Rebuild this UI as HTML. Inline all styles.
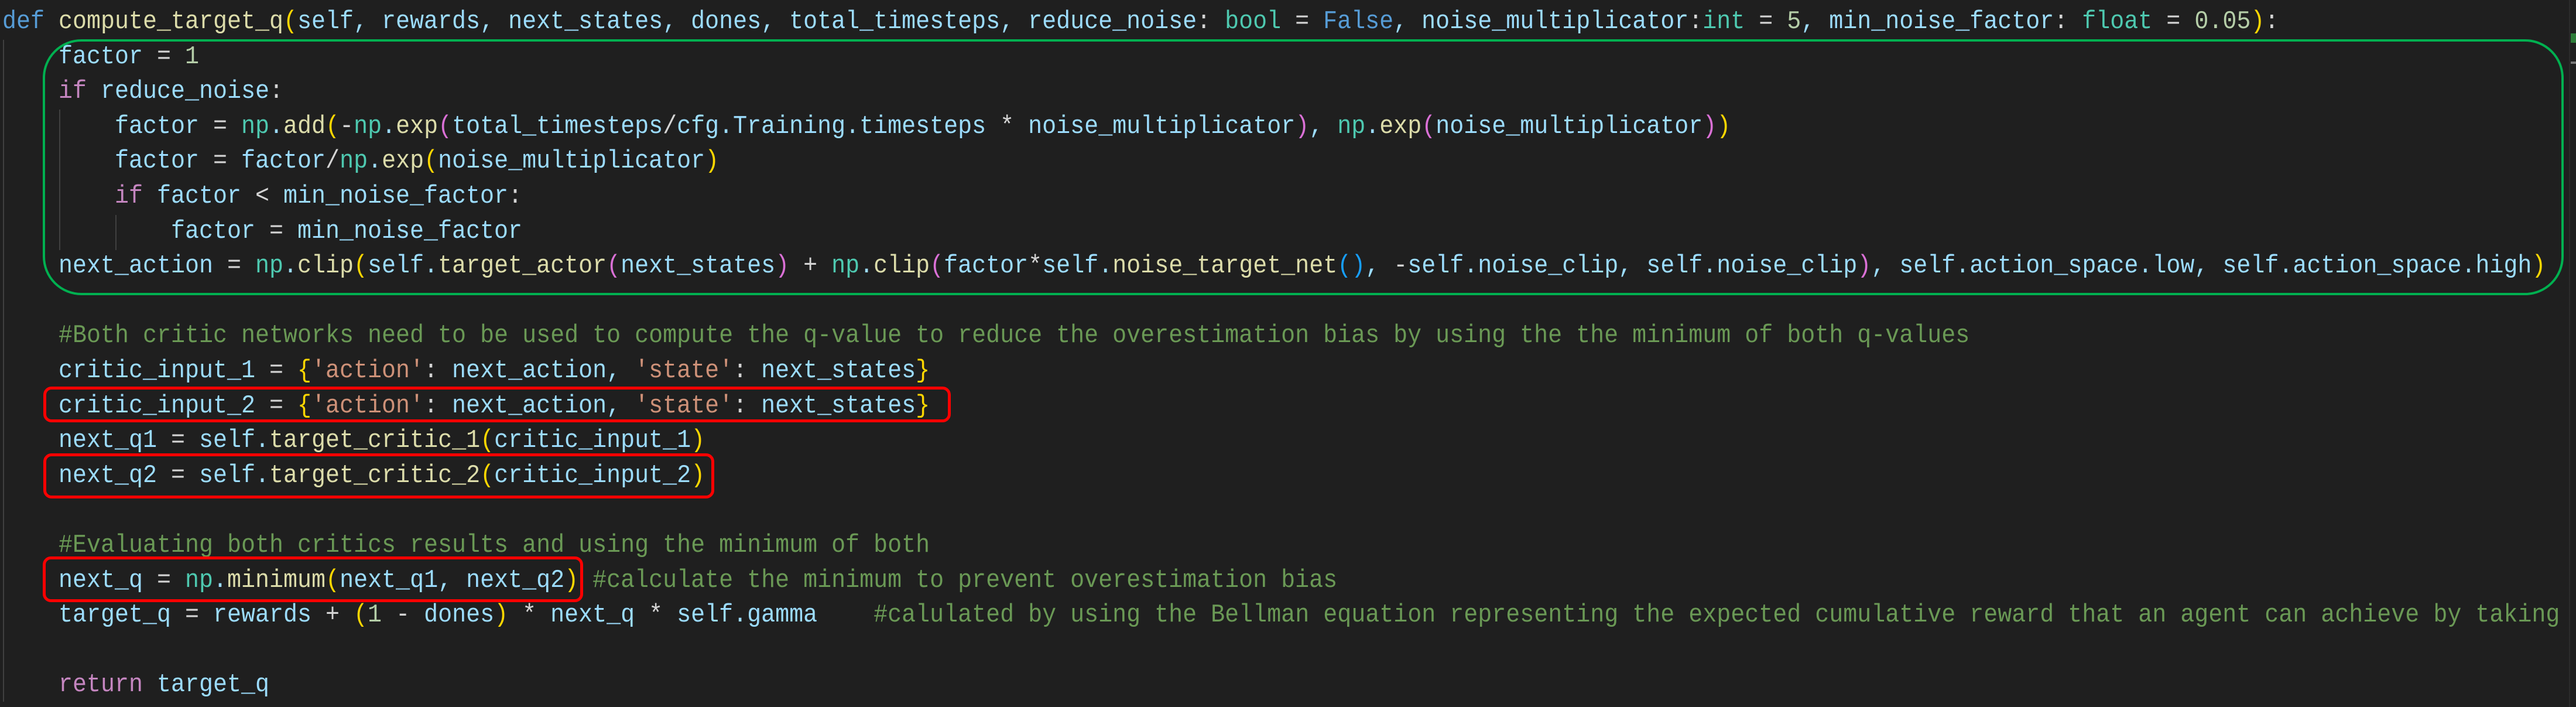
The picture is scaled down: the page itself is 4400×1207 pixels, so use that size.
<!DOCTYPE html>
<html><head><meta charset="utf-8"><style>
html,body{margin:0;padding:0;background:#1f1f1f;}
body{width:4400px;height:1207px;position:relative;overflow:hidden;font-family:"Liberation Mono",monospace;font-size:44px;color:#9cdcfe;}
.l{position:absolute;left:4px;height:59.6px;line-height:59.6px;white-space:pre;width:4822px;overflow:hidden;transform:scaleX(0.909);transform-origin:0 0;}
.k{color:#569cd6}.f{color:#dcdcaa}.c{color:#c586c0}.t{color:#4ec9b0}.n{color:#b5cea8}.s{color:#ce9178}.m{color:#6a9955}.w{color:#d4d4d4}
.b1{color:#ffd700}.b2{color:#da70d6}.b3{color:#179fff}
.g{position:absolute;width:2px;background:#404040}
.box{position:absolute;box-sizing:border-box;}
</style></head><body>
<div class="g" style="left:5px;top:68px;height:1130px"></div>
<div class="g" style="left:101px;top:187px;height:240px"></div>
<div class="g" style="left:197px;top:367px;height:60px"></div>
<div style="position:absolute;left:4388px;top:0;width:2px;height:1207px;background:#2b2b2b"></div>
<div style="position:absolute;left:4391px;top:57px;width:9px;height:16px;background:#2e7d3a"></div>
<div style="position:absolute;left:4391px;top:105px;width:9px;height:4px;background:#777"></div>

<div class="l" style="top:8px"><span class="k">def</span> <span class="f">compute_target_q</span><span class="b1">(</span>self, rewards, next_states, dones, total_timesteps, reduce_noise<span class="w">:</span> <span class="t">bool</span> <span class="w">=</span> <span class="k">False</span>, noise_multiplicator<span class="w">:</span><span class="t">int</span> <span class="w">=</span> <span class="n">5</span>, min_noise_factor<span class="w">:</span> <span class="t">float</span> <span class="w">=</span> <span class="n">0.05</span><span class="b1">)</span><span class="w">:</span></div>
<div class="l" style="top:67.6px">    factor <span class="w">=</span> <span class="n">1</span></div>
<div class="l" style="top:127.2px">    <span class="c">if</span> reduce_noise<span class="w">:</span></div>
<div class="l" style="top:186.8px">        factor <span class="w">=</span> <span class="t">np</span>.<span class="f">add</span><span class="b1">(</span><span class="w">-</span><span class="t">np</span>.<span class="f">exp</span><span class="b2">(</span>total_timesteps<span class="w">/</span>cfg.Training.timesteps <span class="w">*</span> noise_multiplicator<span class="b2">)</span>, <span class="t">np</span>.<span class="f">exp</span><span class="b2">(</span>noise_multiplicator<span class="b2">)</span><span class="b1">)</span></div>
<div class="l" style="top:246.4px">        factor <span class="w">=</span> factor<span class="w">/</span><span class="t">np</span>.<span class="f">exp</span><span class="b1">(</span>noise_multiplicator<span class="b1">)</span></div>
<div class="l" style="top:306px">        <span class="c">if</span> factor <span class="w">&lt;</span> min_noise_factor<span class="w">:</span></div>
<div class="l" style="top:365.6px">            factor <span class="w">=</span> min_noise_factor</div>
<div class="l" style="top:425.2px">    next_action <span class="w">=</span> <span class="t">np</span>.<span class="f">clip</span><span class="b1">(</span>self.<span class="f">target_actor</span><span class="b2">(</span>next_states<span class="b2">)</span> <span class="w">+</span> <span class="t">np</span>.<span class="f">clip</span><span class="b2">(</span>factor<span class="w">*</span>self.<span class="f">noise_target_net</span><span class="b3">()</span>, <span class="w">-</span>self.noise_clip, self.noise_clip<span class="b2">)</span>, self.action_space.low, self.action_space.high<span class="b1">)</span></div>
<div class="l" style="top:544.4px">    <span class="m">#Both critic networks need to be used to compute the q-value to reduce the overestimation bias by using the the minimum of both q-values</span></div>
<div class="l" style="top:604px">    critic_input_1 <span class="w">=</span> <span class="b1">{</span><span class="s">'action'</span><span class="w">:</span> next_action, <span class="s">'state'</span><span class="w">:</span> next_states<span class="b1">}</span></div>
<div class="l" style="top:663.6px">    critic_input_2 <span class="w">=</span> <span class="b1">{</span><span class="s">'action'</span><span class="w">:</span> next_action, <span class="s">'state'</span><span class="w">:</span> next_states<span class="b1">}</span></div>
<div class="l" style="top:723.2px">    next_q1 <span class="w">=</span> self.<span class="f">target_critic_1</span><span class="b1">(</span>critic_input_1<span class="b1">)</span></div>
<div class="l" style="top:782.8px">    next_q2 <span class="w">=</span> self.<span class="f">target_critic_2</span><span class="b1">(</span>critic_input_2<span class="b1">)</span></div>
<div class="l" style="top:902px">    <span class="m">#Evaluating both critics results and using the minimum of both</span></div>
<div class="l" style="top:961.6px">    next_q <span class="w">=</span> <span class="t">np</span>.<span class="f">minimum</span><span class="b1">(</span>next_q1, next_q2<span class="b1">)</span> <span class="m">#calculate the minimum to prevent overestimation bias</span></div>
<div class="l" style="top:1021.2px">    target_q <span class="w">=</span> rewards <span class="w">+</span> <span class="b1">(</span><span class="n">1</span> <span class="w">-</span> dones<span class="b1">)</span> <span class="w">*</span> next_q <span class="w">*</span> self.gamma    <span class="m">#calulated by using the Bellman equation representing the expected cumulative reward that an agent can achieve by taking a certain action</span></div>
<div class="l" style="top:1140.4px">    <span class="c">return</span> target_q</div>

<div class="box" style="left:73px;top:67px;width:4306px;height:437px;border:4px solid #00b050;border-radius:66px;"></div>
<div class="box" style="left:74px;top:660px;width:1550px;height:61px;border:5px solid #ff0000;border-radius:14px;"></div>
<div class="box" style="left:74px;top:774px;width:1146px;height:77px;border:5px solid #ff0000;border-radius:14px;"></div>
<div class="box" style="left:73px;top:950px;width:923px;height:78px;border:5px solid #ff0000;border-radius:14px;"></div>
</body></html>
